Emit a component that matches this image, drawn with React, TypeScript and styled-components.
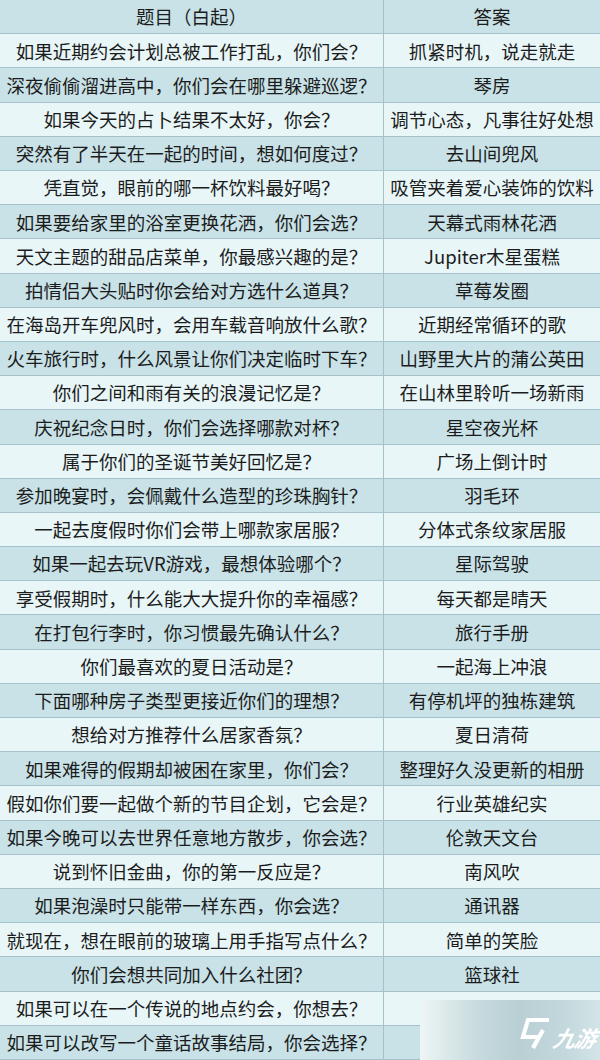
import styled, { createGlobalStyle } from "styled-components";

const GlobalStyle = createGlobalStyle`
  html, body {
    margin: 0;
    padding: 0;
    background: #e8f6f8;
  }
  body {
    font-family: "Microsoft YaHei", "Noto Sans CJK SC", "Noto Sans", sans-serif;
  }
`;

const Page = styled.div`
  position: relative;
  width: 600px;
  height: 1060px;
  overflow: hidden;
`;

const Table = styled.div`
  display: grid;
  grid-template-columns: 384px 1fr;
  grid-template-rows: repeat(31, 1fr);
  width: 600px;
  height: 1060px;
`;

const Cell = styled.div<{ $blue: boolean; $left?: boolean }>`
  display: flex;
  align-items: center;
  justify-content: center;
  white-space: nowrap;
  overflow: hidden;
  font-size: 18.5px;
  line-height: 1;
  color: #1c1c1c;
  background: ${(p) => (p.$blue ? "#c8e2e7" : "#e8f6f8")};
  border-bottom: 1px solid #a4c2c9;
  ${(p) => (p.$left ? "border-right: 1px solid #a4c2c9;" : "")}
`;

const Watermark = styled.div`
  position: absolute;
  left: 420px;
  top: 1000px;
  width: 180px;
  height: 60px;
  display: flex;
  align-items: center;
  justify-content: flex-end;
  gap: 2px;
  padding-right: 4px;
  padding-top: 6px;
  box-sizing: border-box;
  backdrop-filter: blur(6px);
  background: linear-gradient(
    90deg,
    #eef5f6 0%,
    #c9dcdf 30%,
    #b8cfd4 55%,
    #c3d8dc 80%,
    #d2e4e7 100%
  );
`;

const LogoText = styled.span`
  font-family: "Noto Sans CJK SC", sans-serif;
  font-size: 22px;
  font-weight: 700;
  font-style: italic;
  color: #ffffff;
  transform: skewX(-12deg);
  margin-top: 8px;
  letter-spacing: -1px;
`;

const rows: [string, string][] = [
  ["如果近期约会计划总被工作打乱，你们会？", "抓紧时机，说走就走"],
  ["深夜偷偷溜进高中，你们会在哪里躲避巡逻？", "琴房"],
  ["如果今天的占卜结果不太好，你会？", "调节心态，凡事往好处想"],
  ["突然有了半天在一起的时间，想如何度过？", "去山间兜风"],
  ["凭直觉，眼前的哪一杯饮料最好喝？", "吸管夹着爱心装饰的饮料"],
  ["如果要给家里的浴室更换花洒，你们会选？", "天幕式雨林花洒"],
  ["天文主题的甜品店菜单，你最感兴趣的是？", "Jupiter木星蛋糕"],
  ["拍情侣大头贴时你会给对方选什么道具？", "草莓发圈"],
  ["在海岛开车兜风时，会用车载音响放什么歌？", "近期经常循环的歌"],
  ["火车旅行时，什么风景让你们决定临时下车？", "山野里大片的蒲公英田"],
  ["你们之间和雨有关的浪漫记忆是？", "在山林里聆听一场新雨"],
  ["庆祝纪念日时，你们会选择哪款对杯？", "星空夜光杯"],
  ["属于你们的圣诞节美好回忆是？", "广场上倒计时"],
  ["参加晚宴时，会佩戴什么造型的珍珠胸针？", "羽毛环"],
  ["一起去度假时你们会带上哪款家居服？", "分体式条纹家居服"],
  ["如果一起去玩VR游戏，最想体验哪个？", "星际驾驶"],
  ["享受假期时，什么能大大提升你的幸福感？", "每天都是晴天"],
  ["在打包行李时，你习惯最先确认什么？", "旅行手册"],
  ["你们最喜欢的夏日活动是？", "一起海上冲浪"],
  ["下面哪种房子类型更接近你们的理想？", "有停机坪的独栋建筑"],
  ["想给对方推荐什么居家香氛？", "夏日清荷"],
  ["如果难得的假期却被困在家里，你们会？", "整理好久没更新的相册"],
  ["假如你们要一起做个新的节目企划，它会是？", "行业英雄纪实"],
  ["如果今晚可以去世界任意地方散步，你会选？", "伦敦天文台"],
  ["说到怀旧金曲，你的第一反应是？", "南风吹"],
  ["如果泡澡时只能带一样东西，你会选？", "通讯器"],
  ["就现在，想在眼前的玻璃上用手指写点什么？", "简单的笑脸"],
  ["你们会想共同加入什么社团？", "篮球社"],
  ["如果可以在一个传说的地点约会，你想去？", ""],
  ["如果可以改写一个童话故事结局，你会选择？", ""],
];

const LogoMark = () => (
  <svg width="34" height="34" viewBox="0 0 34 34" fill="none">
    <g
      stroke="#ffffff"
      strokeWidth="4.2"
      strokeLinejoin="miter"
      strokeLinecap="butt"
    >
      <path d="M31 4 H10 L5 21 H22" />
      <path d="M25 14 L15 32" />
    </g>
  </svg>
);

export default function App() {
  return (
    <Page>
      <GlobalStyle />
      <Table>
        <Cell $blue $left>
          题目（白起）
        </Cell>
        <Cell $blue>答案</Cell>
        {rows.map(([q, a], i) => {
          const blue = i % 2 === 1;
          return [
            <Cell key={`q${i}`} $blue={blue} $left>
              {q}
            </Cell>,
            <Cell key={`a${i}`} $blue={blue}>
              {a}
            </Cell>,
          ];
        })}
      </Table>
      <Watermark>
        <LogoMark />
        <LogoText>九游</LogoText>
      </Watermark>
    </Page>
  );
}
